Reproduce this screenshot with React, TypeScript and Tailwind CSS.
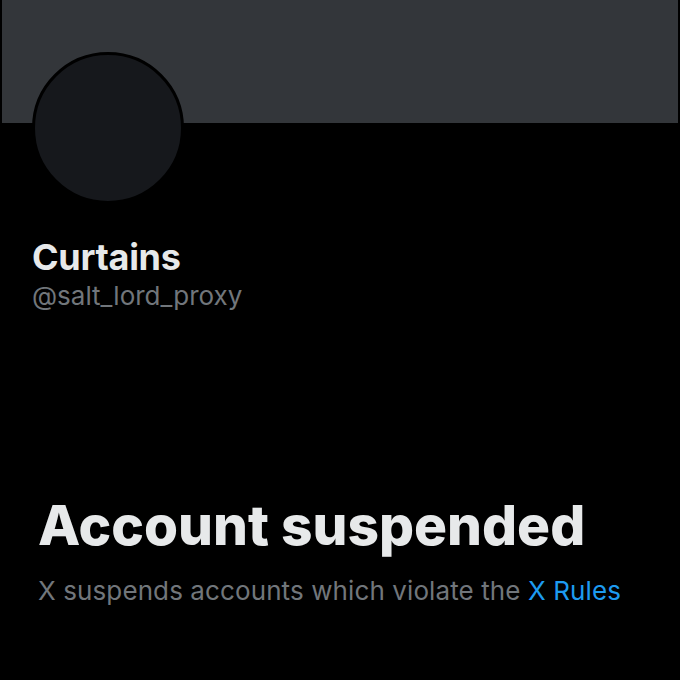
import React from "react";

export default function App() {
  return (
    <div
      className="h-[680px] w-[680px] overflow-hidden bg-black"
      style={{ fontFamily: "Inter, 'Noto Sans', sans-serif" }}
    >
      <div className="mx-[2px] h-[123px] bg-[#33363a]" />
      <div className="ml-[32px] -mt-[71px] h-[152px] w-[152px] rounded-full border-[3px] border-black bg-[#16181c]" />
      <div className="px-[32px] pt-[33px]">
        <h2 className="text-[36px] font-bold leading-[40px] tracking-[-0.3px] text-[#e7e9ea]">
          Curtains
        </h2>
        <p className="mt-[3px] text-[26px] leading-[32px] text-[#71767b]">@salt_lord_proxy</p>
      </div>
      <div className="px-[38px] pt-[182px]">
        <h1 className="text-[55px] font-extrabold leading-[62px] text-[#e7e9ea]">
          Account suspended
        </h1>
        <p className="mt-[19px] text-[26px] leading-[32px] tracking-[0.1px] text-[#71767b]">
          X suspends accounts which violate the{" "}
          <span className="text-[#1d9bf0]">X Rules</span>
        </p>
      </div>
    </div>
  );
}
